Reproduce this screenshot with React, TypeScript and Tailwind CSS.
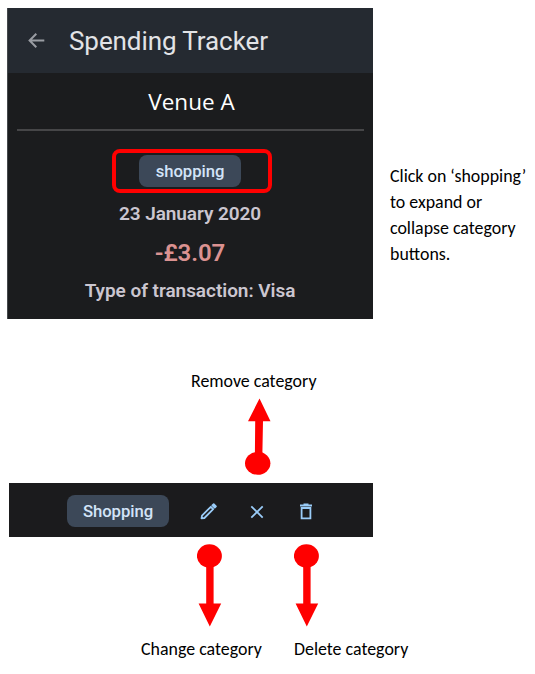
import React from "react";

const caption =
  "font-['Carlito','Calibri','Lato',sans-serif] text-[17.9px] text-black whitespace-nowrap";

function BackArrow() {
  return (
    <svg className="h-[18px] w-[18px]" viewBox="0 0 18 18" fill="none" stroke="#9a9da3" strokeWidth="2">
      <path d="M16.3 8.5H1.8M8.3 1.8L1.6 8.5l6.7 6.7" />
    </svg>
  );
}

function PinArrow({ up = false }: { up?: boolean }) {
  return up ? (
    <svg className="block h-[77px] w-[26px]" viewBox="0 0 26 77" fill="#ff0000">
      <ellipse cx="12.7" cy="65.3" rx="12.7" ry="11.5" />
      <path d="M14.5 0.5L25.5 23.2H18L17.2 65H9.8L10.2 23.2H3z" />
    </svg>
  ) : (
    <svg className="block h-[83px] w-[26px]" viewBox="0 0 26 83" fill="#ff0000">
      <ellipse cx="12.4" cy="12" rx="12.5" ry="11.7" />
      <path d="M9.2 12H16.6V59.5H24.2L12.8 82.5L1.6 59.5H9.2z" />
    </svg>
  );
}

function Chip({ label }: { label: string }) {
  return (
    <div className="flex h-8 w-[102px] items-center justify-center rounded-[8px] bg-[#3c4858] pt-px text-[16.7px] font-medium tracking-[-0.05px] text-[#d3e4f8]">
      {label}
    </div>
  );
}

export default function App() {
  return (
    <div className="h-[674px] w-[535px] overflow-hidden bg-white pt-2 font-['Roboto',sans-serif]">
      <div className="flex">
        <section className="ml-[7px] h-[311px] w-[366px] shrink-0 border-l border-[#45494c] bg-[#1b1c1e]">
          <header className="flex h-[65px] items-center bg-[#252a31] pl-5">
            <BackArrow />
            <h1 className="ml-[23px] whitespace-nowrap text-[26px] leading-8 tracking-[-0.08px] text-[#e2e3e6]">Spending Tracker</h1>
          </header>
          <div className="mx-[9px] flex h-[58px] items-center justify-center border-b-2 border-[#464648] pl-0.5 pt-0.5 font-['Open_Sans',sans-serif] text-[22.5px] text-white">
            Venue A
          </div>
          <div className="ml-[104px] mt-[18px] flex h-[44px] w-[160px] items-center justify-center rounded-[8px] border-4 border-[#ff0000] pr-1">
            <Chip label="shopping" />
          </div>
          <div className="w-[364px] text-center text-[#cbc6d0]">
            <p className="mt-[9px] text-[19px] font-semibold leading-6 tracking-[-0.08px]">23 January 2020</p>
            <p className="mt-[13px] text-[24px] font-semibold leading-7 tracking-[-0.1px] text-[#db9291]">-£3.07</p>
            <p className="mt-[12px] text-[19px] font-semibold leading-6 tracking-[-0.04px]">Type of transaction: Visa</p>
          </div>
        </section>
        <p className={`${caption} ml-[17px] mt-[155px] leading-[26px]`}>
          Click on ‘shopping’
          <br />
          to expand or
          <br />
          collapse category
          <br />
          buttons.
        </p>
      </div>

      <div className="ml-[191px] mt-[52px] h-[27px]">
        <span className={`${caption} block leading-5`}>Remove category</span>
      </div>
      <div className="ml-[245px] h-[85px]">
        <PinArrow up />
      </div>

      <section className="ml-[9px] flex h-[54px] w-[364px] items-center bg-[#1b1b1d] pl-[58px]">
        <div className="mt-0.5">
          <Chip label="Shopping" />
        </div>
        <svg className="ml-[31px] mt-1 h-[18px] w-[18px]" viewBox="0 0 18 18" fill="none" stroke="#9accf8" strokeWidth="1.8" strokeLinejoin="round">
          <path d="M1.5 15.4L2 12.6L10.8 3.8L13.2 6.2L4.4 15z" />
          <path d="M12.4 2.4L13.7 1.2L15.9 3.4L14.7 4.6z" fill="#9accf8" />
        </svg>
        <svg className="ml-[32px] mt-1 h-[14px] w-[14px]" viewBox="0 0 14 14" fill="none" stroke="#9accf8" strokeWidth="1.8">
          <path d="M1.3 1.3L12.7 12.7M12.7 1.3L1.3 12.7" />
        </svg>
        <svg className="ml-[35px] mt-0.5 h-[17px] w-[14px]" viewBox="0 0 14 17" fill="none" stroke="#9accf8" strokeWidth="1.8">
          <path d="M1 2.5H13M4.5 1.5H9.5M2.6 5V15.3H11.4V5z" />
        </svg>
      </section>

      <div className="ml-[197px] mt-[7px] flex gap-[71px]">
        <PinArrow />
        <PinArrow />
      </div>
      <div className="ml-[141px] mt-3 flex">
        <span className={`${caption} w-[153px] leading-5`}>Change category</span>
        <span className={`${caption} leading-5`}>Delete category</span>
      </div>
    </div>
  );
}
